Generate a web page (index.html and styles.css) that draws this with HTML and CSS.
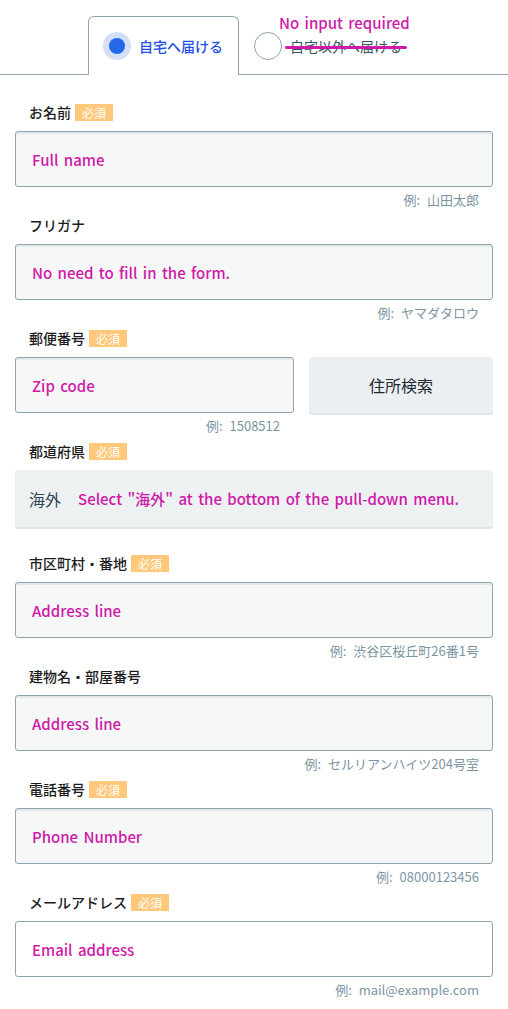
FILE: index.html
```html
<!DOCTYPE html>
<html lang="ja">
<head>
<meta charset="utf-8">
<link rel="stylesheet" href="styles.css">
</head>
<body>
<div class="tabs">
  <div class="tab active">
    <span class="radio on"></span>
    <span class="tab-text">自宅へ届ける</span>
  </div>
  <div class="tab other">
    <span class="radio"></span>
    <span class="tab-text struck">自宅以外へ届ける</span>
    <span class="note">No input required</span>
  </div>
</div>

<form class="form">
  <div class="field">
    <div class="label">お名前<span class="badge">必須</span></div>
    <div class="input"><span class="ph">Full name</span></div>
    <div class="hint">例: 山田太郎</div>
  </div>
  <div class="field">
    <div class="label">フリガナ</div>
    <div class="input"><span class="ph">No need to fill in the form.</span></div>
    <div class="hint">例: ヤマダタロウ</div>
  </div>
  <div class="field">
    <div class="label">郵便番号<span class="badge">必須</span></div>
    <div class="zip-row">
      <div class="zip-col">
        <div class="input"><span class="ph">Zip code</span></div>
        <div class="hint">例: 1508512</div>
      </div>
      <div class="btn">住所検索</div>
    </div>
  </div>
  <div class="field select-field">
    <div class="label">都道府県<span class="badge">必須</span></div>
    <div class="select"><span class="sel-val">海外</span><span class="ph">Select "海外" at the bottom of the pull-down menu.</span></div>
  </div>
  <div class="field">
    <div class="label">市区町村・番地<span class="badge">必須</span></div>
    <div class="input"><span class="ph">Address line</span></div>
    <div class="hint">例: 渋谷区桜丘町26番1号</div>
  </div>
  <div class="field">
    <div class="label">建物名・部屋番号</div>
    <div class="input"><span class="ph">Address line</span></div>
    <div class="hint">例: セルリアンハイツ204号室</div>
  </div>
  <div class="field">
    <div class="label">電話番号<span class="badge">必須</span></div>
    <div class="input"><span class="ph">Phone Number</span></div>
    <div class="hint">例: 08000123456</div>
  </div>
  <div class="field">
    <div class="label">メールアドレス<span class="badge">必須</span></div>
    <div class="input white"><span class="ph">Email address</span></div>
    <div class="hint">例: mail@example.com</div>
  </div>
</form>
</body>
</html>
```

FILE: styles.css
```css
* { box-sizing: border-box; }
body {
  margin: 0;
  background: #fff;
  font-family: "Noto Sans CJK JP", "Noto Sans", sans-serif;
  color: #1c1c1c;
}
.tabs {
  display: flex;
  padding: 16px 0 0 88px;
  border-bottom: 1px solid #90a4ae;
  height: 75px;
}
.tab {
  display: flex;
  align-items: center;
  height: 59px;
  position: relative;
}
.tab.active {
  width: 151px;
  padding-left: 14px;
  border: 1px solid #90a4ae;
  border-bottom: none;
  border-radius: 6px 6px 0 0;
  background: #fff;
  margin-bottom: -1px;
}
.tab.other {
  padding-left: 15px;
}
.radio {
  width: 28px;
  height: 28px;
  border-radius: 50%;
  border: 1px solid #90a4ae;
  background: #fff;
  flex: none;
  display: flex;
  align-items: center;
  justify-content: center;
}
.radio.on {
  border: none;
  background: #d3e0f8;
}
.radio.on::after {
  content: "";
  width: 16px;
  height: 16px;
  border-radius: 50%;
  background: #2468ea;
}
.tab-text {
  font-size: 14px;
  margin-left: 8px;
  line-height: 20px;
  font-weight: 500;
}
.active .tab-text { color: #1f4fe4; }
.other .tab-text { color: #37525f; font-weight: 400; }
.struck { position: relative; }
.struck::after {
  content: "";
  position: absolute;
  left: -5px;
  right: -5px;
  top: 10px;
  height: 3px;
  border-radius: 2px;
  background: #cf1aa9;
}
.note {
  position: absolute;
  left: 40px;
  top: -4px;
  font-size: 15px;
  font-weight: 500;
  color: #cf1aa9;
  white-space: nowrap;
  word-spacing: 2px;
}
.form {
  padding: 27px 15px 0 15px;
}
.field {
  margin-bottom: 6px;
}
.label {
  display: flex;
  align-items: center;
  height: 20px;
  padding-left: 14px;
  font-size: 14px;
  font-weight: 500;
  margin-bottom: 9px;
}
.badge {
  display: inline-block;
  margin-left: 4px;
  background: #ffc87a;
  color: #fff;
  font-size: 12px;
  font-weight: 400;
  line-height: 17px;
  height: 17px;
  padding: 0 7px;
}
.input {
  height: 56px;
  border: 1px solid #90a4ae;
  border-radius: 3px;
  background: #f6f8f8;
  box-shadow: inset 0 2px 0 #e3e8eb;
  display: flex;
  align-items: center;
  padding-left: 16px;
}
.input.white {
  background: #fff;
  box-shadow: none;
}
.ph {
  color: #cf1aa9;
  font-size: 15px;
  font-weight: 500;
  word-spacing: 2px;
}
.hint {
  text-align: right;
  padding-right: 14px;
  margin-top: 4px;
  font-size: 13px;
  line-height: 18px;
  color: #7d95a3;
  word-spacing: 4px;
}
.zip-row {
  display: flex;
  gap: 15px;
}
.zip-col {
  width: 279px;
}
.btn {
  flex: 1;
  height: 56px;
  background: #eceff1;
  border-radius: 3px;
  box-shadow: 0 2px 0 #dfe5e8;
  display: flex;
  align-items: center;
  justify-content: center;
  font-size: 16px;
  color: #1c2a33;
}
.select-field {
  margin-bottom: 26px;
}
.select {
  height: 57px;
  background: #eef1f2;
  border-radius: 3px;
  box-shadow: 0 2px 0 #dde3e6;
  display: flex;
  align-items: center;
  padding-left: 14px;
}
.sel-val {
  font-size: 16px;
  color: #2d4654;
  margin-right: 17px;
}
```
